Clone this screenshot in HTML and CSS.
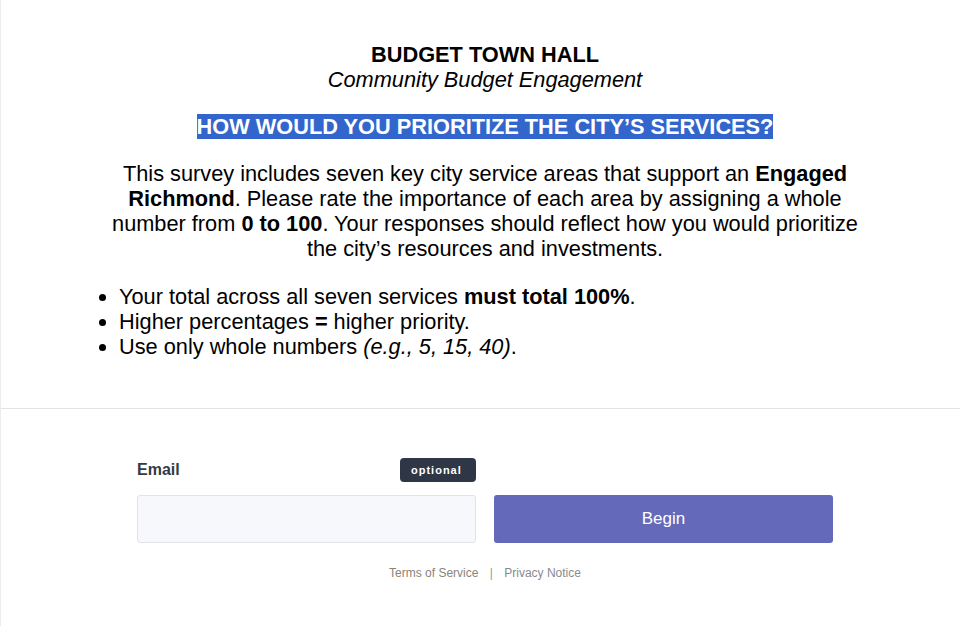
FILE: index.html
```html
<!DOCTYPE html>
<html>
<head>
<meta charset="utf-8">
<link rel="stylesheet" href="styles.css">
</head>
<body>
<div class="page">
  <section class="intro">
    <h1 class="title">BUDGET TOWN HALL</h1>
    <p class="subtitle">Community Budget Engagement</p>
    <h2 class="question"><span class="mark">HOW WOULD YOU PRIORITIZE THE CITY’S SERVICES?</span></h2>
    <p class="lead">This survey includes seven key city service areas that support an <b>Engaged Richmond</b>. Please rate the importance of each area by assigning a whole number from <b>0 to 100</b>. Your responses should reflect how you would prioritize the city’s resources and investments.</p>
    <ul class="rules">
      <li>Your total across all seven services <b>must total 100%</b>.</li>
      <li>Higher percentages <b>=</b> higher priority.</li>
      <li>Use only whole numbers <i>(e.g., 5, 15, 40)</i>.</li>
    </ul>
  </section>
  <section class="start">
    <div class="form">
      <div class="field">
        <div class="label-row">
          <label class="label" for="email">Email</label>
          <span class="badge">optional</span>
        </div>
        <input id="email" class="input" type="email">
      </div>
      <button class="begin">Begin</button>
    </div>
    <div class="legal">
      <a class="link terms">Terms of Service</a>
      <span class="sep">|</span>
      <a class="link privacy">Privacy Notice</a>
    </div>
  </section>
</div>
</body>
</html>
```
FILE: styles.css
```css
html, body {
  margin: 0;
  padding: 0;
  background: #fff;
}
body {
  font-family: "Liberation Sans", Arial, sans-serif;
  color: #000;
}
.page {
  min-height: 626px;
  border-left: 1px solid #ececec;
  box-sizing: border-box;
}
.intro {
  width: 760px;
  margin: 0 auto;
  padding: 42px 0 49px 9px;
  text-align: center;
  font-size: 21.75px;
  line-height: 25px;
}
.title {
  margin: 0;
  font-size: 21.75px;
  line-height: 25px;
  font-weight: bold;
}
.subtitle {
  margin: 0;
  font-style: italic;
}
.question {
  margin: 22px 0 0;
  font-size: 21.75px;
  line-height: 25px;
  font-weight: bold;
}
.mark {
  background: #3366cc;
  color: #fff;
  padding: 0;
}
.lead {
  margin: 22px 0 0;
}
.rules {
  margin: 23px 0 0;
  padding: 0 0 0 14px;
  text-align: left;
}
.start {
  border-top: 1px solid #e3e3e3;
  padding-top: 49px;
  padding-left: 9px;
}
.form {
  width: 696px;
  margin: 0 auto;
  display: grid;
  grid-template-columns: 339px 339px;
  column-gap: 18px;
  align-items: end;
}
.label-row {
  display: flex;
  justify-content: space-between;
  align-items: center;
  height: 24px;
  margin-bottom: 13px;
}
.label {
  font-size: 16px;
  font-weight: bold;
  color: #333a45;
}
.badge {
  background: #2f3646;
  color: #fff;
  font-size: 11px;
  font-weight: bold;
  letter-spacing: 1px;
  border-radius: 4px;
  height: 24px;
  line-height: 24px;
  padding: 0 10px 0 11px;
  box-sizing: border-box;
  width: 76px;
}
.input {
  display: block;
  width: 100%;
  height: 48px;
  box-sizing: border-box;
  background: #f7f8fc;
  border: 1px solid #e1e3ea;
  border-radius: 3px;
  margin: 0;
  padding: 0 12px;
  font: inherit;
}
.begin {
  height: 48px;
  background: #6469b9;
  color: #fff;
  border: none;
  border-radius: 3px;
  font-family: "Liberation Sans", Arial, sans-serif;
  font-size: 17px;
  margin: 0;
  padding: 0;
}
.legal {
  width: 696px;
  margin: 22px auto 0;
  text-align: center;
  font-size: 12px;
  line-height: 16px;
  color: #8a8a8a;
}
.link {
  text-decoration: none;
}
.terms {
  color: #8e8276;
}
.privacy {
  color: #8a8a8f;
}
.sep {
  margin: 0 8px;
  color: #9a9a9a;
}
```
